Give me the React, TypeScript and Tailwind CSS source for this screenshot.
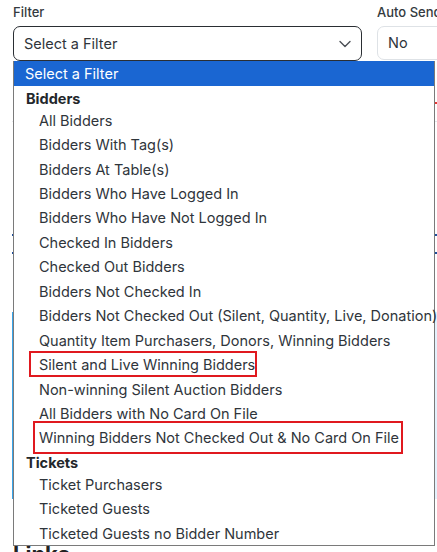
import React from "react";

type Row = { label: string; kind: "first" | "group" | "opt"; box?: "a" | "b" };

const rows: Row[] = [
  { label: "Select a Filter", kind: "first" },
  { label: "Bidders", kind: "group" },
  { label: "All Bidders", kind: "opt" },
  { label: "Bidders With Tag(s)", kind: "opt" },
  { label: "Bidders At Table(s)", kind: "opt" },
  { label: "Bidders Who Have Logged In", kind: "opt" },
  { label: "Bidders Who Have Not Logged In", kind: "opt" },
  { label: "Checked In Bidders", kind: "opt" },
  { label: "Checked Out Bidders", kind: "opt" },
  { label: "Bidders Not Checked In", kind: "opt" },
  { label: "Bidders Not Checked Out (Silent, Quantity, Live, Donation)", kind: "opt" },
  { label: "Quantity Item Purchasers, Donors, Winning Bidders", kind: "opt" },
  { label: "Silent and Live Winning Bidders", kind: "opt", box: "a" },
  { label: "Non-winning Silent Auction Bidders", kind: "opt" },
  { label: "All Bidders with No Card On File", kind: "opt" },
  { label: "Winning Bidders Not Checked Out & No Card On File", kind: "opt", box: "b" },
  { label: "Tickets", kind: "group" },
  { label: "Ticket Purchasers", kind: "opt" },
  { label: "Ticketed Guests", kind: "opt" },
  { label: "Ticketed Guests no Bidder Number", kind: "opt" },
];

function Chevron({ className }: { className?: string }) {
  return (
    <svg className={className} width="12" height="8" viewBox="0 0 12 8" fill="none">
      <polyline points="1,1.5 6,6.5 11,1.5" stroke="#4a4f55" strokeWidth="1.4" strokeLinecap="round" strokeLinejoin="round" />
    </svg>
  );
}

export default function App() {
  return (
    <div
      className="relative w-[437px] h-[552px] overflow-hidden bg-white text-[#2f353b]"
      style={{ fontFamily: "Inter, 'Noto Sans', sans-serif" }}
    >
      {/* header row */}
      <div className="flex gap-[15px] pl-[13px] pt-[3px]">
        <div className="w-[349px] shrink-0 flex flex-col">
          <div className="text-[13px] leading-[18px] font-medium text-[#343a40] mb-[5px]">Filter</div>
          <div className="h-[35px] border-[1.5px] border-[#2a2e33] rounded-[7px] flex items-center justify-between pl-[10px] pr-[10px]">
            <span className="text-[14.5px] text-[#2f353b]">Select a Filter</span>
            <Chevron />
          </div>
        </div>
        <div className="w-[120px] shrink-0 flex flex-col">
          <div className="text-[13px] leading-[18px] font-medium text-[#343a40] mb-[5px] whitespace-nowrap">Auto Send</div>
          <div className="h-[34px] border border-[#dee2e6] rounded-[7px] flex items-center pl-[10px] gap-[34px]">
            <span className="text-[14.5px] text-[#2f353b]">No</span>
            <Chevron />
          </div>
        </div>
      </div>

      {/* background content partly hidden behind the open list */}
      <div className="flex flex-col pl-[12px] mt-[40px]">
        <div className="h-[1px] bg-[#e5e7eb] mt-[20px]" />
        <div className="h-[2px] w-[60px] ml-auto bg-[#e53935] -mt-[20px] mb-[20px]" />
        <div className="flex flex-col gap-[16px] mt-[110px]">
          <div className="h-[2px] bg-[#1e4f9c]" />
          <div className="h-[2px] bg-[#1e4f9c]" />
        </div>
        <div className="mt-[58px] h-[187px] border-l-2 border-[#3aa5ea] bg-[#e3f2fd]" />
        <div className="mt-[43px] pl-[1px] text-[22px] font-bold leading-[24px] text-[#222]">Links</div>
      </div>

      {/* open dropdown list */}
      <div className="absolute left-[13px] top-[61px] w-[422px] border border-t-0 border-[#7a7a7a] bg-white flex flex-col">
        {rows.map((r) => {
          if (r.kind === "first") {
            return (
              <div key={r.label} className="h-[24.5px] bg-[#1a66d2] text-white text-[14.5px] leading-[25.5px] pl-[11px]">
                {r.label}
              </div>
            );
          }
          if (r.kind === "group") {
            return (
              <div key={r.label} className="h-[22.2px] text-[14.5px] font-bold leading-[25px] pl-[12px] text-[#23272b]">
                {r.label}
              </div>
            );
          }
          return (
            <div key={r.label} className="relative h-[24.45px] text-[14.5px] leading-[26px] pl-[25px] whitespace-nowrap text-[#2f353b]">
              {r.label}
              {r.box === "a" && (
                <div className="absolute left-[15px] top-[-1px] w-[228px] h-[26px] border-2 border-[#e0191f]" />
              )}
              {r.box === "b" && (
                <div className="absolute left-[19px] top-[-4px] w-[370px] h-[33px] border-2 border-[#e0191f]" />
              )}
            </div>
          );
        })}
      </div>
    </div>
  );
}
